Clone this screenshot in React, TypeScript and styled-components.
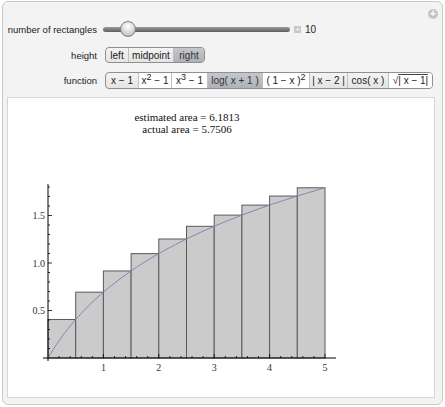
import * as React from 'react';
import styled, { createGlobalStyle } from 'styled-components';

const GlobalStyle = createGlobalStyle`
  html, body { margin: 0; padding: 0; background: #fff; }
  body { font-family: "Liberation Sans", Arial, sans-serif; }
`;

const Panel = styled.div`
  position: relative;
  box-sizing: border-box;
  width: 441px;
  height: 404px;
  margin: 1px 0 0 2px;
  border: 1px solid #c9c9c9;
  border-radius: 6px;
  background: #f3f3f3;
  display: flex;
  flex-direction: column;
  padding: 19px 7px 6px 0;
`;

const CornerButton = styled.div`
  position: absolute;
  top: 7px;
  right: 4px;
  width: 10px;
  height: 10px;
  border-radius: 50%;
  background: #c4c4c4;
  color: #fff;
  font-size: 10px;
  line-height: 10px;
  font-weight: bold;
  text-align: center;
`;

const Controls = styled.div`
  display: grid;
  grid-template-columns: 94px 1fr;
  grid-template-rows: 17px 16px 17px;
  column-gap: 6px;
  row-gap: 9px;
  margin-bottom: 8px;
`;

const Label = styled.div`
  display: flex;
  align-items: center;
  justify-content: flex-end;
  font-size: 9.5px;
  color: #222;
`;

const SliderRow = styled.div`
  display: flex;
  align-items: center;
`;

const Track = styled.div`
  position: relative;
  width: 187px;
  height: 5px;
  border-radius: 3px;
  background: linear-gradient(#9a9a9a, #5e5e5e);
`;

const Knob = styled.div`
  position: absolute;
  top: -6px;
  left: 17px;
  box-sizing: border-box;
  width: 16px;
  height: 16px;
  border-radius: 50%;
  border: 1px solid #7d7d7d;
  background: radial-gradient(circle at 50% 30%, #ffffff, #d0d3d6 60%, #a9adb1);
`;

const PlusBox = styled.div`
  width: 7px;
  height: 7px;
  margin-left: 4px;
  background: #c8c8c8;
  color: #fff;
  font-size: 8px;
  line-height: 7px;
  text-align: center;
`;

const Value = styled.span`
  margin-left: 4px;
  font-size: 10px;
  color: #222;
`;

const Group = styled.div`
  display: flex;
  align-self: stretch;
  margin-left: 2px;
  border: 1px solid #8f8f8f;
  border-radius: 4px;
  overflow: hidden;
  background: linear-gradient(#f4f4f4, #e4e4e4);
  width: fit-content;
`;

const Seg = styled.div<{ $on?: boolean; $raised?: boolean; $w: number }>`
  box-sizing: border-box;
  width: ${p => p.$w}px;
  display: flex;
  align-items: center;
  justify-content: center;
  font-size: 10px;
  white-space: nowrap;
  color: ${p => (p.$on ? '#333' : '#222')};
  border-left: 1px solid #c0c0c0;
  background: ${p =>
    p.$on
      ? 'linear-gradient(#c4c8cc, #aeb2b6)'
      : p.$raised
      ? '#ffffff'
      : 'transparent'};
  &:first-child { border-left: none; }
`;

const Sup = styled.sup`
  font-size: 9px;
  line-height: 0;
  vertical-align: 4px;
`;

const Over = styled.span`
  border-top: 1px solid #444;
`;

const Sheet = styled.div`
  flex: 1;
  margin-left: 4px;
  background: #fff;
  border: 1px solid #d6d6d6;
`;

const Figure = styled.div`
  width: 358px;
  padding-top: 13px;
  display: flex;
  flex-direction: column;
  align-items: center;
`;

const Caption = styled.div`
  font-family: "Liberation Serif", "Times New Roman", serif;
  font-size: 11px;
  line-height: 12px;
  color: #111;
`;

const Chart = styled.svg`
  display: block;
  align-self: flex-start;
  margin-top: 4px;
`;

const f = (x: number) => Math.log(x + 1);
const OX = 40;
const OY = 219;
const SX = 55.4;
const SY = 95;
const px = (x: number) => OX + x * SX;
const py = (y: number) => OY - y * SY;

const heights = ['left', 'midpoint', 'right'];

const functions: { key: string; w: number; raised?: boolean; on?: boolean; label: React.ReactNode }[] = [
  { key: 'a', w: 32, label: <span>x − 1</span> },
  { key: 'b', w: 33, raised: true, label: <span>x<Sup>2</Sup> − 1</span> },
  { key: 'c', w: 36, raised: true, label: <span>x<Sup>3</Sup> − 1</span> },
  { key: 'd', w: 55, on: true, label: <span>log( x + 1 )</span> },
  { key: 'e', w: 47, raised: true, label: <span>( 1 − x )<Sup>2</Sup></span> },
  { key: 'f', w: 38, label: <span>| x − 2 |</span> },
  { key: 'g', w: 41, label: <span>cos( x )</span> },
  { key: 'h', w: 44, raised: true, label: <span>√<Over>| x − 1|</Over></span> },
];

function Plot() {
  const n = 10;
  const dx = 0.5;
  const rects = Array.from({ length: n }, (_, i) => {
    const x = i * dx;
    const h = f(x + dx);
    return (
      <rect
        key={i}
        x={px(x)}
        y={py(h)}
        width={dx * SX}
        height={h * SY}
        fill="#cbcbcb"
        stroke="#5a5a5a"
        strokeWidth={1}
      />
    );
  });

  const curve = Array.from({ length: 101 }, (_, i) => {
    const x = (i / 100) * 5;
    return `${px(x).toFixed(2)},${py(f(x)).toFixed(2)}`;
  }).join(' ');

  const xTicks = [];
  for (let i = 1; i <= 25; i++) {
    const x = i * 0.2;
    const major = i % 5 === 0;
    xTicks.push(
      <line key={'x' + i} x1={px(x)} x2={px(x)} y1={OY} y2={OY - (major ? 4 : 2)} stroke="#000" strokeWidth={0.8} />
    );
  }
  const yTicks = [];
  for (let i = 1; i <= 18; i++) {
    const y = i * 0.1;
    const major = i % 5 === 0;
    yTicks.push(
      <line key={'y' + i} x1={OX} x2={OX + (major ? 4 : 2)} y1={py(y)} y2={py(y)} stroke="#000" strokeWidth={0.8} />
    );
  }

  return (
    <Chart width={358} height={240} viewBox="0 0 358 240">
      {rects}
      <polyline points={curve} fill="none" stroke="#8484b4" strokeWidth={1} />
      <line x1={OX - 5} x2={OX + 5.2 * SX} y1={OY} y2={OY} stroke="#000" strokeWidth={1} />
      <line x1={OX} x2={OX} y1={OY + 3} y2={py(1.83)} stroke="#000" strokeWidth={1} />
      {xTicks}
      {yTicks}
      <g fontFamily='"Liberation Serif", "Times New Roman", serif' fontSize={10} fill="#333">
        {[1, 2, 3, 4, 5].map(v => (
          <text key={v} x={px(v)} y={OY + 13} textAnchor="middle">{v}</text>
        ))}
        {['0.5', '1.0', '1.5'].map(v => (
          <text key={v} x={OX - 3} y={py(parseFloat(v)) + 3.5} textAnchor="end">{v}</text>
        ))}
      </g>
    </Chart>
  );
}

export default function App() {
  return (
    <>
      <GlobalStyle />
      <Panel>
        <CornerButton>+</CornerButton>
        <Controls>
          <Label>number of rectangles</Label>
          <SliderRow>
            <Track>
              <Knob />
            </Track>
            <PlusBox>+</PlusBox>
            <Value>10</Value>
          </SliderRow>
          <Label>height</Label>
          <Group>
            {heights.map((h, i) => (
              <Seg key={h} $w={[22, 45, 31][i]} $on={h === 'right'}>{h}</Seg>
            ))}
          </Group>
          <Label>function</Label>
          <Group>
            {functions.map(fn => (
              <Seg key={fn.key} $w={fn.w} $on={fn.on} $raised={fn.raised}>{fn.label}</Seg>
            ))}
          </Group>
        </Controls>
        <Sheet>
          <Figure>
            <Caption>estimated area = 6.1813</Caption>
            <Caption>actual area = 5.7506</Caption>
            <Plot />
          </Figure>
        </Sheet>
      </Panel>
    </>
  );
}
